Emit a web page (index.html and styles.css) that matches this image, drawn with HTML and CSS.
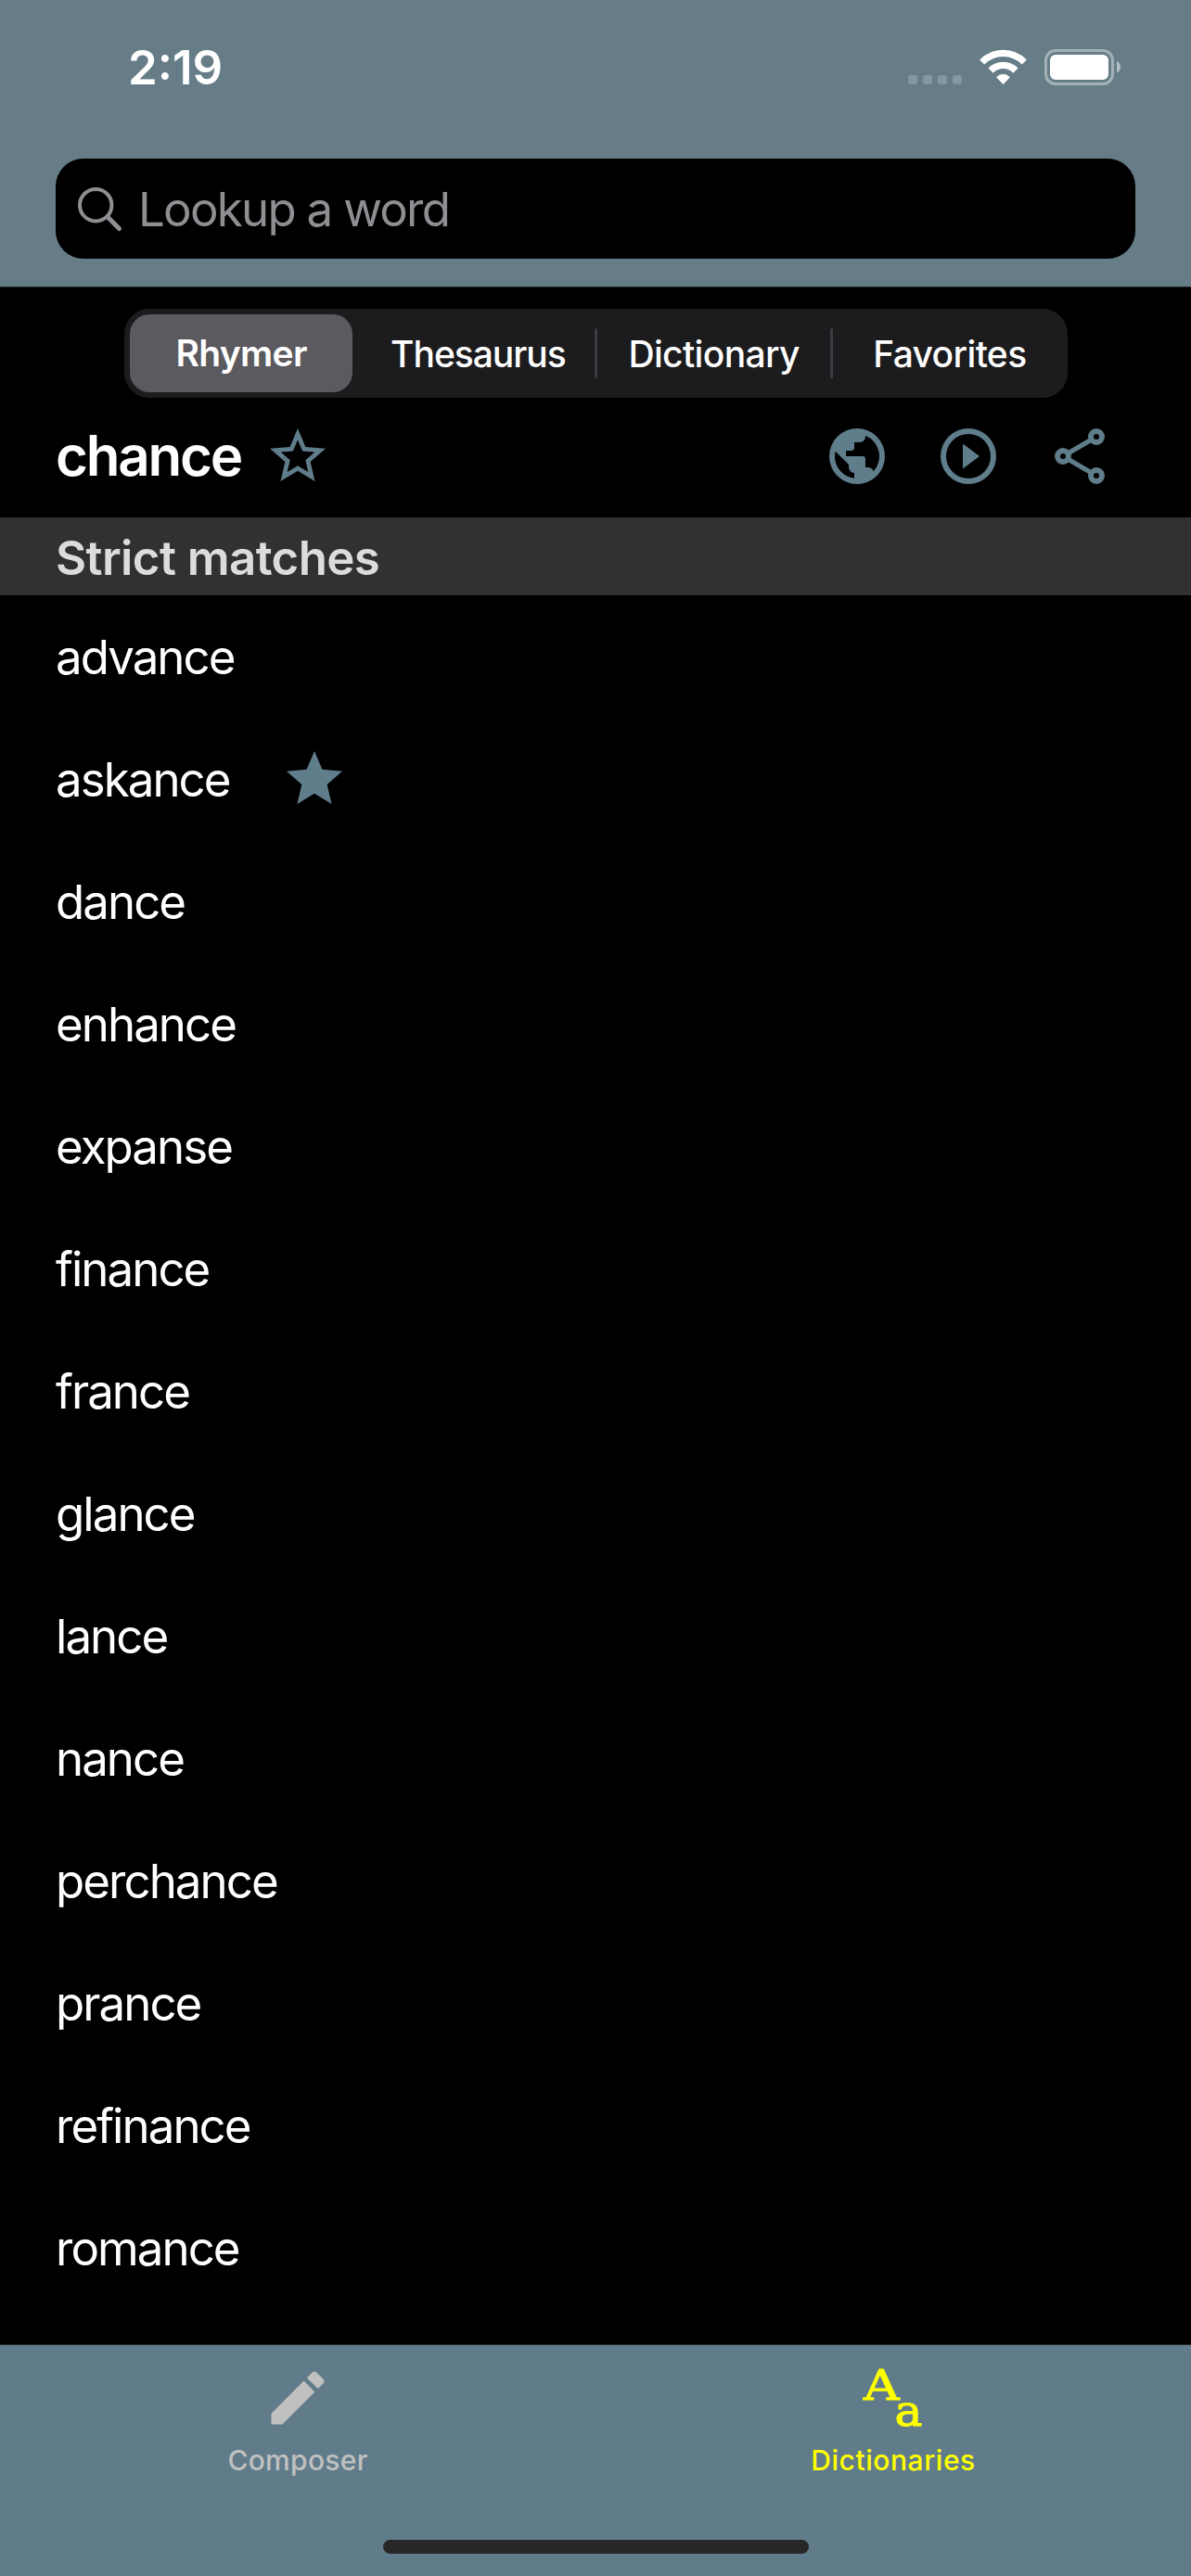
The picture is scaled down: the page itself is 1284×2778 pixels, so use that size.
FILE: index.html
```html
<!DOCTYPE html>
<html lang="en">
<head>
<meta charset="utf-8">
<title>Rhymer</title>
<link rel="stylesheet" href="styles.css">
</head>
<body>
<div class="screen">
  <header class="header">
    <div class="status">
      <span class="time">2:19</span>
      <div class="indicators">
        <svg class="dots" viewBox="0 0 58 10" fill="#fff" fill-opacity=".2"><rect width="10" height="10" rx="3"/><rect x="16" width="10" height="10" rx="3"/><rect x="32" width="10" height="10" rx="3"/><rect x="48" width="10" height="10" rx="3"/></svg>
        <svg class="wifi" viewBox="0 0 51 37" fill="none" stroke="#fff">
          <path d="M2.700 13A31.700 31.700 0 0 1 48.300 13" stroke-width="7.200"/>
          <path d="M12.100 22.100A18.600 18.600 0 0 1 38.900 22.100" stroke-width="7.400"/>
          <path d="M18.500 29.200A10 10 0 0 1 32.500 29.200L25.500 36.600Z" fill="#fff" stroke-width=".8" stroke-linejoin="round"/>
        </svg>
        <svg class="battery" viewBox="0 0 82 39"><rect x="1.500" y="1.500" width="72" height="36" rx="10.500" fill="none" stroke="#fff" stroke-opacity=".4" stroke-width="3"/><rect x="6" y="6" width="63" height="27" rx="6" fill="#fff"/><path d="M78 13v12.500c2.500-1 4-3.400 4-6.200s-1.500-5.300-4-6.300z" fill="#fff" fill-opacity=".5"/></svg>
      </div>
    </div>
    <div class="search">
      <svg class="search-icon" viewBox="0 0 47 47" fill="none" stroke="#8e8e93" stroke-linecap="round"><circle cx="19.200" cy="19.200" r="17.200" stroke-width="4"/><path d="M32 32 44.500 44.500" stroke-width="5"/></svg>
      <span class="placeholder">Lookup a word</span>
    </div>
  </header>

  <nav class="segments">
    <span class="segment"><span class="selected">Rhymer</span></span>
    <span class="segment thesaurus">Thesaurus</span>
    <i class="divider"></i>
    <span class="segment">Dictionary</span>
    <i class="divider"></i>
    <span class="segment">Favorites</span>
  </nav>

  <div class="title-row">
    <h1 class="word">chance</h1>
    <svg class="icon" viewBox="0 0 24 24"><path d="M12 15.390 8.240 17.660 9.230 13.380 5.910 10.500 10.290 10.130 12 6.090 13.710 10.130 18.090 10.500 14.770 13.380 15.760 17.660M22 9.240 14.810 8.630 12 2 9.190 8.630 2 9.240 7.450 13.970 5.820 21 12 17.270 18.180 21 16.540 13.970Z"/></svg>
    <div class="actions">
      <svg class="icon" viewBox="0 0 24 24"><path d="M17.900 17.390c-.26-.8-1.010-1.390-1.900-1.390h-1v-3a1 1 0 0 0-1-1H8v-2h2a1 1 0 0 0 1-1V7h2a2 2 0 0 0 2-2v-.41A7.980 7.980 0 0 1 17.900 17.390M11 19.930C7.050 19.440 4 16.080 4 12c0-.62.08-1.220.21-1.790L9 15v1a2 2 0 0 0 2 2M12 2a10 10 0 1 0 0 20 10 10 0 0 0 0-20Z"/></svg>
      <svg class="icon" viewBox="0 0 24 24"><path fill-rule="evenodd" d="M12 2a10 10 0 1 0 0 20 10 10 0 0 0 0-20ZM12 4a8 8 0 1 1 0 16 8 8 0 0 1 0-16ZM10 7.500v9l6-4.500Z"/></svg>
      <svg class="icon share" viewBox="0 0 24 24"><path d="M6 12 18 5M6 12 18 19" stroke-width="1.700"/><circle cx="18" cy="5" r="2"/><circle cx="6" cy="12" r="2"/><circle cx="18" cy="19" r="2"/></svg>
    </div>
  </div>

  <h2 class="section">Strict matches</h2>
  <ul class="list">
    <li>advance</li>
    <li>askance<svg class="icon favorite" viewBox="0 0 24 24"><path d="M12 17.270 18.180 21 16.540 13.970 22 9.240 14.810 8.620 12 2 9.190 8.620 2 9.240 7.450 13.970 5.820 21Z"/></svg></li>
    <li>dance</li>
    <li>enhance</li>
    <li>expanse</li>
    <li>finance</li>
    <li>france</li>
    <li>glance</li>
    <li>lance</li>
    <li>nance</li>
    <li>perchance</li>
    <li>prance</li>
    <li>refinance</li>
    <li>romance</li>
  </ul>

  <footer class="footer">
    <div class="tabs">
      <div class="tab">
        <svg class="tab-icon" viewBox="0 0 24 24" fill="currentColor"><path d="M20.710 7.040c.39-.39.39-1.040 0-1.410l-2.340-2.340c-.37-.39-1.020-.39-1.410 0l-1.840 1.830 3.750 3.750M3 17.250V21h3.750L17.810 9.930l-3.750-3.750Z"/></svg>
        <span class="composer">Composer</span>
      </div>
      <div class="tab active">
        <svg class="tab-icon" viewBox="0 0 76 76" fill="currentColor"><text class="glyph" x="6" y="39.500" font-size="45" textLength="38.500" lengthAdjust="spacingAndGlyphs">A</text><text class="glyph" x="39.500" y="67.500" font-size="47" textLength="30" lengthAdjust="spacingAndGlyphs">a</text></svg>
        <span class="dictionaries">Dictionaries</span>
      </div>
    </div>
    <div class="home-indicator"></div>
  </footer>
</div>
</body>
</html>
```
FILE: styles.css
```css
* { box-sizing: border-box; }

body {
  margin: 0;
  background: #000;
  color: #fff;
  font-family: Inter, "Liberation Sans", sans-serif;
}

svg { display: block; flex: none; overflow: visible; }

.screen {
  display: flex;
  flex-direction: column;
  width: 1284px;
  height: 2778px;
  overflow: hidden;
}

.header {
  flex: none;
  height: 310px;
  padding: 0 60px;
  background: #667d88;
  border-bottom: 1px solid #1f2629;
}

.status {
  display: flex;
  justify-content: space-between;
  height: 171px;
  padding: 53px 16px 0 78px;
}

.time {
  height: 39px;
  font-size: 51px;
  font-weight: 600;
  line-height: 39px;
}

.indicators { display: flex; align-items: flex-end; height: 39px; }
.dots { width: 58px; height: 10px; margin: 0 19px 1px 0; }
.wifi { width: 51px; height: 37px; margin: 0 19px 1px 0; }
.battery { width: 82px; height: 39px; }

.search {
  display: flex;
  align-items: center;
  height: 108px;
  padding-left: 24px;
  background: #000;
  border-radius: 30px;
}

.search-icon { width: 47px; height: 47px; margin-right: 18px; }

.placeholder {
  color: #8e8e93;
  font-size: 51px;
  letter-spacing: -1.73px;
}

.segments {
  display: flex;
  flex: none;
  align-items: center;
  width: 1017px;
  height: 96px;
  margin: 23px auto 0 134px;
  background: #1c1c1e;
  border-radius: 27px;
  font-size: 39px;
  font-weight: 500;
}

.segment {
  flex: 1 1 0;
  text-align: center;
  letter-spacing: -.65px;
}

.thesaurus { letter-spacing: -1.05px; }

.selected {
  display: block;
  height: 84px;
  margin: 0 8px 0 6px;
  background: #5b5a5f;
  border-radius: 21px;
  font-weight: 600;
  line-height: 84px;
}

.divider {
  width: 3px;
  height: 54px;
  margin: 0 -1.5px;
  background: #3d3d41;
  border-radius: 2px;
}

.title-row {
  display: flex;
  flex: none;
  align-items: center;
  height: 129px;
  padding: 0 84px 3px 60px;
}

.word {
  width: 225px;
  margin: 0;
  padding-bottom: 2px;
  font-size: 60px;
  font-weight: 600;
  letter-spacing: -2.2px;
}

.icon { width: 72px; height: 72px; fill: #607d8b; }
.actions { display: flex; gap: 48px; margin-left: auto; }
.share { fill: none; stroke: #607d8b; stroke-width: 2; }
.share circle { fill: #000; }

.section {
  flex: none;
  height: 84px;
  margin: 0;
  padding: 2px 0 0 60px;
  background: #313133;
  color: #dcdcdc;
  font-size: 51px;
  font-weight: 600;
  line-height: 84px;
  letter-spacing: -.6px;
}

.list {
  flex: 1;
  margin: 0;
  padding: 0 0 0 60px;
  list-style: none;
  font-size: 51px;
  letter-spacing: -1.95px;
}

.list li { display: flex; align-items: center; height: 132px; }
.favorite { margin-left: 55.5px; }

.footer {
  flex: none;
  height: 250px;
  background: #607c8a;
  border-top: 1px solid #26292b;
}

.tabs { display: flex; height: 210px; }

.tab {
  display: flex;
  flex: 1;
  flex-direction: column;
  align-items: center;
  padding-top: 19px;
  color: #c0c0c0;
  font-size: 30px;
  font-weight: 500;
  line-height: 36px;
}

.active { color: #ff0; }
.tab-icon { width: 76px; height: 76px; margin-bottom: 11px; }

.glyph {
  font-family: "DejaVu Serif", serif;
  font-weight: 400;
  stroke: currentColor;
  stroke-width: 1;
  stroke-linejoin: round;
}

.composer { letter-spacing: .3px; }
.dictionaries { letter-spacing: .57px; }

.home-indicator {
  width: 459px;
  height: 15px;
  margin: 0 auto;
  background: #272727;
  border-radius: 8px;
}
```
